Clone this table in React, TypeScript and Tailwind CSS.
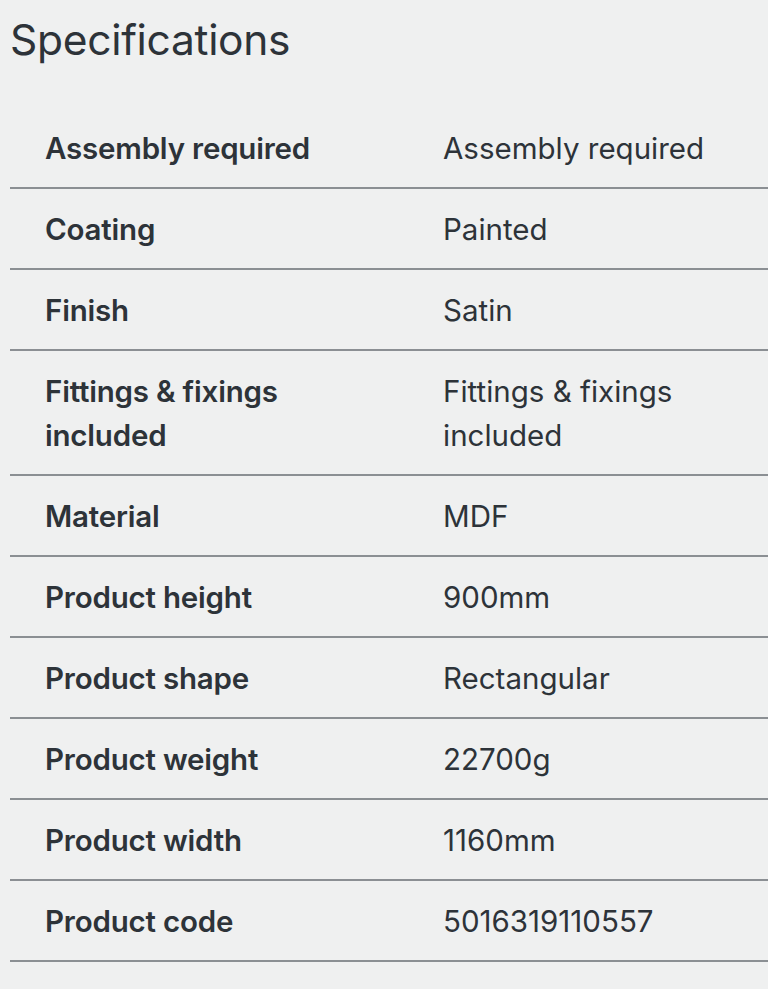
const specs: [string, string][] = [
  ["Assembly required", "Assembly required"],
  ["Coating", "Painted"],
  ["Finish", "Satin"],
  ["Fittings & fixings included", "Fittings & fixings included"],
  ["Material", "MDF"],
  ["Product height", "900mm"],
  ["Product shape", "Rectangular"],
  ["Product weight", "22700g"],
  ["Product width", "1160mm"],
  ["Product code", "5016319110557"],
];

export default function App() {
  return (
    <div
      className="min-h-[989px] bg-[#eff0f0] text-[#2d3339] pl-[10px]"
      style={{ fontFamily: "Inter, 'Noto Sans', sans-serif" }}
    >
      <h2 className="pt-[15px] text-[42.5px] leading-[50px] font-normal tracking-[-0.3px]">
        Specifications
      </h2>
      <div className="mt-[43px]">
        {specs.map(([label, value]) => (
          <div
            key={label}
            className="flex border-b-2 border-[#8b8f93] py-[17.5px] text-[29.5px] leading-[44px]"
          >
            <div className="w-[433px] shrink-0 pl-[35px] pr-[40px] font-semibold tracking-[-0.2px]">
              {label}
            </div>
            <div className="flex-1 pr-[60px]">{value}</div>
          </div>
        ))}
      </div>
    </div>
  );
}
